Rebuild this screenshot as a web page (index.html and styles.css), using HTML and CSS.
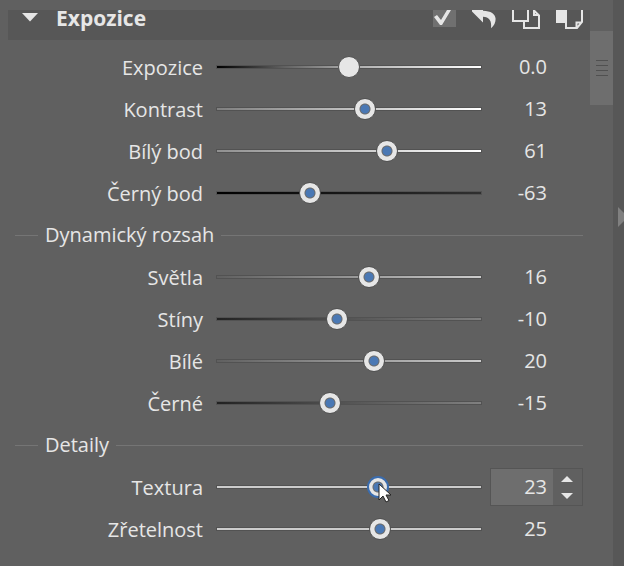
FILE: index.html
```html
<!DOCTYPE html>
<html lang="cs">
<head>
<meta charset="utf-8">
<meta name="viewport" content="width=device-width, initial-scale=1">
<title>Expozice</title>
<link rel="stylesheet" href="styles.css">
</head>
<body>
<main class="app">
  <section class="panel">
    <header class="panel-head">
      <button class="icon-btn toggle" type="button" aria-label="Sbalit">
        <svg width="16" height="9" viewBox="0 0 16 9"><path d="M0 0h16L8 8.500z"/></svg>
      </button>
      <h1 class="title">Expozice</h1>
      <div class="tools">
        <input class="check" type="checkbox" checked aria-label="Zapnuto">
        <button class="icon-btn" type="button" aria-label="Zpět">
          <svg width="24" height="20" viewBox="0 0 24 20"><path d="M0 0v1.500l11 11V6.800c6 0 9 4 8 11.500 3-2.500 4.800-6 4.600-9.500C23.300 4 19 1 11 .8V0z"/></svg>
        </button>
        <button class="icon-btn" type="button" aria-label="Kopírovat">
          <svg width="28" height="20" viewBox="0 0 28 20"><path class="line" d="M1 0v11h15V0M12 12v6h15V5.500L21.500 0M22 0v5h5"/></svg>
        </button>
        <button class="icon-btn" type="button" aria-label="Vložit">
          <svg width="27" height="20" viewBox="0 0 27 20"><path d="M0 0h9v13H0z"/><path class="line" d="M10 0v18h11l5-6V0M20.500 18v-5.500H26"/></svg>
        </button>
      </div>
    </header>

    <div class="rows">
      <div class="row"><label for="s1">Expozice</label><input id="s1" class="slider neutral t-exposure" type="range" min="-100" max="100" value="0"><output for="s1">0.0</output></div>
      <div class="row"><label for="s2">Kontrast</label><input id="s2" class="slider t-contrast" type="range" min="-100" max="100" value="13"><output for="s2">13</output></div>
      <div class="row"><label for="s3">Bílý bod</label><input id="s3" class="slider t-whitepoint" type="range" min="-200" max="200" value="61"><output for="s3">61</output></div>
      <div class="row"><label for="s4">Černý bod</label><input id="s4" class="slider t-blackpoint" type="range" min="-200" max="200" value="-63"><output for="s4">-63</output></div>
      <h2 class="divider">Dynamický rozsah</h2>
      <div class="row"><label for="s5">Světla</label><input id="s5" class="slider t-light" type="range" min="-100" max="100" value="16"><output for="s5">16</output></div>
      <div class="row"><label for="s6">Stíny</label><input id="s6" class="slider t-dark" type="range" min="-100" max="100" value="-10"><output for="s6">-10</output></div>
      <div class="row"><label for="s7">Bílé</label><input id="s7" class="slider t-light" type="range" min="-100" max="100" value="20"><output for="s7">20</output></div>
      <div class="row"><label for="s8">Černé</label><input id="s8" class="slider t-dark" type="range" min="-100" max="100" value="-15"><output for="s8">-15</output></div>
      <h2 class="divider">Detaily</h2>
      <div class="row"><label for="s9">Textura</label>
        <div class="hovered">
          <input id="s9" class="slider active t-flat" type="range" min="-100" max="100" value="23">
          <svg class="cursor" width="14" height="22" viewBox="0 0 14 22"><path d="M1 1v16l4-4 3 6 3-1.500-3-5.500h5z"/></svg>
        </div>
        <div class="spin">
          <input type="text" inputmode="numeric" value="23" aria-label="Textura">
          <div class="steps">
            <button class="icon-btn" type="button" aria-label="Zvýšit"><svg width="12" height="6" viewBox="0 0 12 6"><path d="M0 6h12L6 0z"/></svg></button>
            <button class="icon-btn" type="button" aria-label="Snížit"><svg width="12" height="6" viewBox="0 0 12 6"><path d="M0 0h12L6 6z"/></svg></button>
          </div>
        </div>
      </div>
      <div class="row"><label for="s10">Zřetelnost</label><input id="s10" class="slider t-flat" type="range" min="-100" max="100" value="25"><output for="s10">25</output></div>
    </div>
  </section>

  <div class="scroll"><div class="grip"><i></i><i></i><i></i><i></i></div></div>
  <aside class="edge"><button class="icon-btn" type="button" aria-label="Skrýt panel"><svg width="6" height="20" viewBox="0 0 6 20"><path d="M0 0v20L10 10z"/></svg></button></aside>
</main>
</body>
</html>
```

FILE: styles.css
```css
* { box-sizing: border-box; }

body {
  margin: 0;
  background: #606060;
  color: #e6e6e6;
  font: 20px/28px "Open Sans", "Noto Sans", sans-serif;
}

.app { display: flex; min-height: 100vh; }
.panel { flex: 1; padding: 10px 0 0 8px; }

.panel-head {
  display: flex;
  height: 30px;
  padding: 0 7px 0 14px;
  background: #575757;
}
.icon-btn {
  display: block;
  padding: 0;
  border: 0;
  background: none;
  color: #e6e6e6;
}
.icon-btn svg { display: block; fill: currentColor; }
.icon-btn .line { fill: none; stroke: currentColor; stroke-width: 2; }
.toggle { align-self: flex-start; margin: 3px 18px 0 0; }
.title { margin: 0; font-size: 21px; line-height: 16px; font-weight: 700; }
.tools { display: flex; align-items: flex-start; gap: 16px; margin-left: auto; }

.check {
  appearance: none;
  width: 23px;
  height: 17px;
  margin: 0;
  background: #707070;
}
.check:checked::before {
  content: "";
  display: block;
  height: 17px;
  background: #e6e6e6;
  clip-path: polygon(1px 7px, 4px 5px, 8px 10px, 14px 0, 18px 0, 9px 15px, 7px 15px);
}

.rows { padding: 6px 7px 0; }
.row {
  display: grid;
  grid-template-columns: 188px 1fr 98px;
  align-items: center;
  height: 42px;
}
.row label { padding-top: 2px; text-align: right; }
.row output { padding-right: 36px; text-align: right; }

.slider {
  appearance: none;
  display: block;
  width: calc(100% - 10px);
  height: 22px;
  margin: 0 0 0 10px;
  outline: 0;
  background:
    linear-gradient(90deg, var(--track)) center / calc(100% - 8px) 2px no-repeat,
    linear-gradient(#525252, #525252) center / calc(100% - 6px) 4px no-repeat;
}
.slider::-webkit-slider-thumb {
  appearance: none;
  width: 22px;
  height: 22px;
  border: 1px solid #525252;
  border-radius: 50%;
  background: radial-gradient(circle, #4a78b4 4px, #6b6b6b 5px, #e6e6e6 6px);
}
.neutral::-webkit-slider-thumb { background: #e6e6e6; }
.active::-webkit-slider-thumb { border: 2px solid #3a6cae; }

.t-exposure { --track: #000, #606060 25%, #aaa 50%, #fff; }
.t-contrast { --track: #808080, #fff; }
.t-whitepoint { --track: #909090, #fff; }
.t-blackpoint { --track: #000, #303030; }
.t-light { --track: #606060, #ccc; }
.t-dark { --track: #222, #555 50%, #808080; }
.t-flat { --track: #ccc, #ccc; }

.divider {
  display: flex;
  align-items: center;
  gap: 7px;
  height: 42px;
  margin: 0;
  font-size: 20px;
  font-weight: 400;
}
.divider::before, .divider::after { content: ""; height: 1px; background: #757575; }
.divider::before { width: 23px; }
.divider::after { flex: 1; }

.hovered { position: relative; }
.cursor { position: absolute; left: 175px; top: 7px; fill: #fff; stroke: #222; }

.spin {
  display: flex;
  height: 38px;
  margin-left: 5px;
  border: 1px solid #555;
}
.spin input {
  width: 62px;
  padding: 0 6px 0 0;
  border: 0;
  outline: 0;
  background: #6e6e6e;
  color: inherit;
  font: inherit;
  text-align: right;
}
.steps {
  flex: 1;
  display: flex;
  flex-direction: column;
  align-items: center;
  justify-content: center;
  gap: 11px;
  padding-right: 2px;
}

.scroll { width: 23px; padding-top: 31px; }
.grip {
  display: flex;
  flex-direction: column;
  align-items: center;
  justify-content: center;
  gap: 4px;
  height: 74px;
  background: #6e6e6e;
}
.grip i { width: 12px; height: 1px; background: #505050; }

.edge { width: 11px; padding: 207px 0 0 5px; background: #575757; }
.edge .icon-btn { color: #808080; }
```
